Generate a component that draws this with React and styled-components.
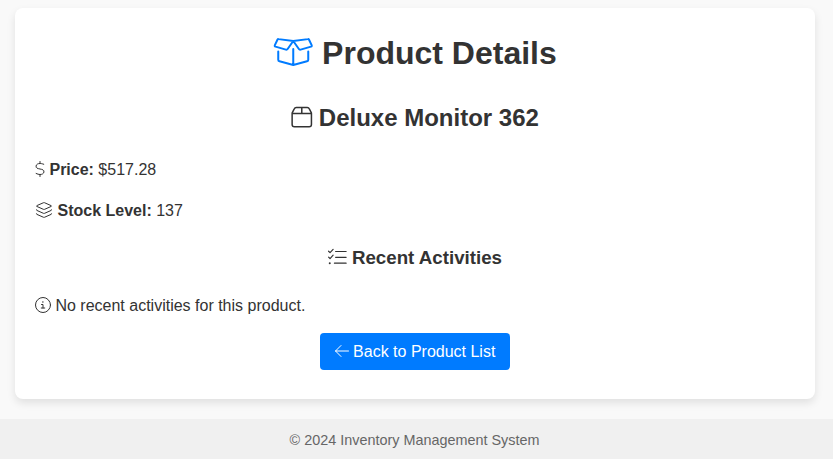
import React from "react";
import styled, { createGlobalStyle } from "styled-components";

const GlobalStyle = createGlobalStyle`
  body {
    margin: 0;
    background: #f9f9f9;
    color: #333;
    font-family: Arial, "Liberation Sans", sans-serif;
    font-size: 16px;
    line-height: 25.6px;
  }
`;

const Page = styled.div`
  height: 459px;
  box-sizing: border-box;
  padding-top: 8px;
  display: flex;
  flex-direction: column;
  overflow: hidden;
`;

const Card = styled.main`
  box-sizing: border-box;
  width: 800px;
  height: 391px;
  margin: 0 0 20px 15px;
  padding: 20px;
  border-radius: 8px;
  background: #fff;
  box-shadow: 0 4px 8px rgba(0, 0, 0, 0.1);
`;

const Title = styled.h1`
  margin: 0 0 20px;
  font-size: 32px;
  line-height: 51px;
  text-align: center;
`;

const ProductName = styled.h2`
  margin: 0 0 20px;
  font-size: 24px;
  line-height: 38px;
  text-align: center;
`;

const Detail = styled.p`
  margin: 0 0 15px;
  line-height: 26px;
`;

const SectionTitle = styled.h3`
  margin: 0 0 20px;
  padding-top: 4px;
  font-size: 18.72px;
  line-height: 30px;
  text-align: center;
`;

const Actions = styled.div`
  display: flex;
  justify-content: center;
  margin-top: -1px;
`;

const BackLink = styled.a`
  box-sizing: border-box;
  height: 37px;
  width: 190px;
  line-height: 37px;
  border-radius: 4px;
  background: #007bff;
  color: #fff;
  text-align: center;
  text-decoration: none;
`;

const Footer = styled.footer`
  height: 40px;
  padding-right: 4px;
  background: #f0f0f0;
  color: #666;
  font-size: 14.4px;
  line-height: 42px;
  text-align: center;
`;

const Glyph = styled.svg`
  height: 1em;
  width: ${(p) => p.$units / 512}em;
  vertical-align: -0.125em;
  overflow: visible;
  fill: none;
  stroke: ${(p) => p.$color || "currentColor"};
  stroke-width: 32;
  stroke-linecap: round;
  stroke-linejoin: round;
`;

const Icon = ({ units = 512, color, children }) => (
  <Glyph viewBox={`0 0 ${units} 512`} $units={units} $color={color} aria-hidden="true">
    {children}
  </Glyph>
);

const BoxOpenIcon = () => (
  <Icon units={640} color="#007bff">
    <path d="M324 80 90 50Q77 48 71 60L30 146Q22 164 40 170L206 218Q224 223 234 208ZM324 80 558 50Q571 48 577 60L618 146Q626 164 608 170L442 218Q424 223 414 208Z" />
    <path d="M84 248V380Q84 400 104 405L324 464 544 405Q564 400 564 380V248M324 208V464" />
  </Icon>
);

const BoxIcon = () => (
  <Icon units={448}>
    <path d="M24 181V416a48 48 0 0 0 48 48H388a48 48 0 0 0 48-48V181Q436 170 432 161L391 82Q377 52 347 52H113Q83 52 69 82L28 161Q24 170 24 181ZM26 180H434M230 52V180" />
  </Icon>
);

const DollarIcon = () => (
  <Icon units={320}>
    <path d="M160 16V80M160 432V496M280 104C230 86 190 80 160 80C90 80 40 110 34 161C25 226 82 242 160 256C238 270 295 287 286 352C279 403 229 432 160 432C122 432 75 419 36 400" />
  </Icon>
);

const LayersIcon = () => (
  <Icon units={576}>
    <path d="M275 21Q288 15 301 21L520 118Q542 129 520 140L301 237Q288 243 275 237L56 140Q34 129 56 118Z" />
    <path d="M46 248Q40 260 56 268L275 364Q288 370 301 364L520 268Q536 260 530 248M46 374Q40 386 56 394L275 490Q288 496 301 490L520 394Q536 386 530 374" />
  </Icon>
);

const ListCheckIcon = () => (
  <Icon>
    <path d="M16 88 56 128 140 36M16 248 56 288 140 196M208 96H496M208 256H496M176 416H496" />
    <circle cx="48" cy="416" r="28" fill="currentColor" stroke="none" />
  </Icon>
);

const InfoIcon = () => (
  <Icon>
    <circle cx="256" cy="256" r="240" />
    <path d="M208 240H256V352M200 352H312" />
    <circle cx="252" cy="160" r="24" fill="currentColor" stroke="none" />
  </Icon>
);

const ArrowLeftIcon = () => (
  <Icon units={448}>
    <path d="M192 80 16 256 192 432M16 256H432" />
  </Icon>
);

export default function App() {
  return (
    <>
      <GlobalStyle />
      <Page>
        <Card>
          <Title><BoxOpenIcon /> Product Details</Title>
          <ProductName><BoxIcon /> Deluxe Monitor 362</ProductName>
          <Detail><DollarIcon /> <strong>Price:</strong> $517.28</Detail>
          <Detail><LayersIcon /> <strong>Stock Level:</strong> 137</Detail>
          <SectionTitle><ListCheckIcon /> Recent Activities</SectionTitle>
          <Detail><InfoIcon /> No recent activities for this product.</Detail>
          <Actions>
            <BackLink href="#products"><ArrowLeftIcon /> Back to Product List</BackLink>
          </Actions>
        </Card>
        <Footer>© 2024 Inventory Management System</Footer>
      </Page>
    </>
  );
}
